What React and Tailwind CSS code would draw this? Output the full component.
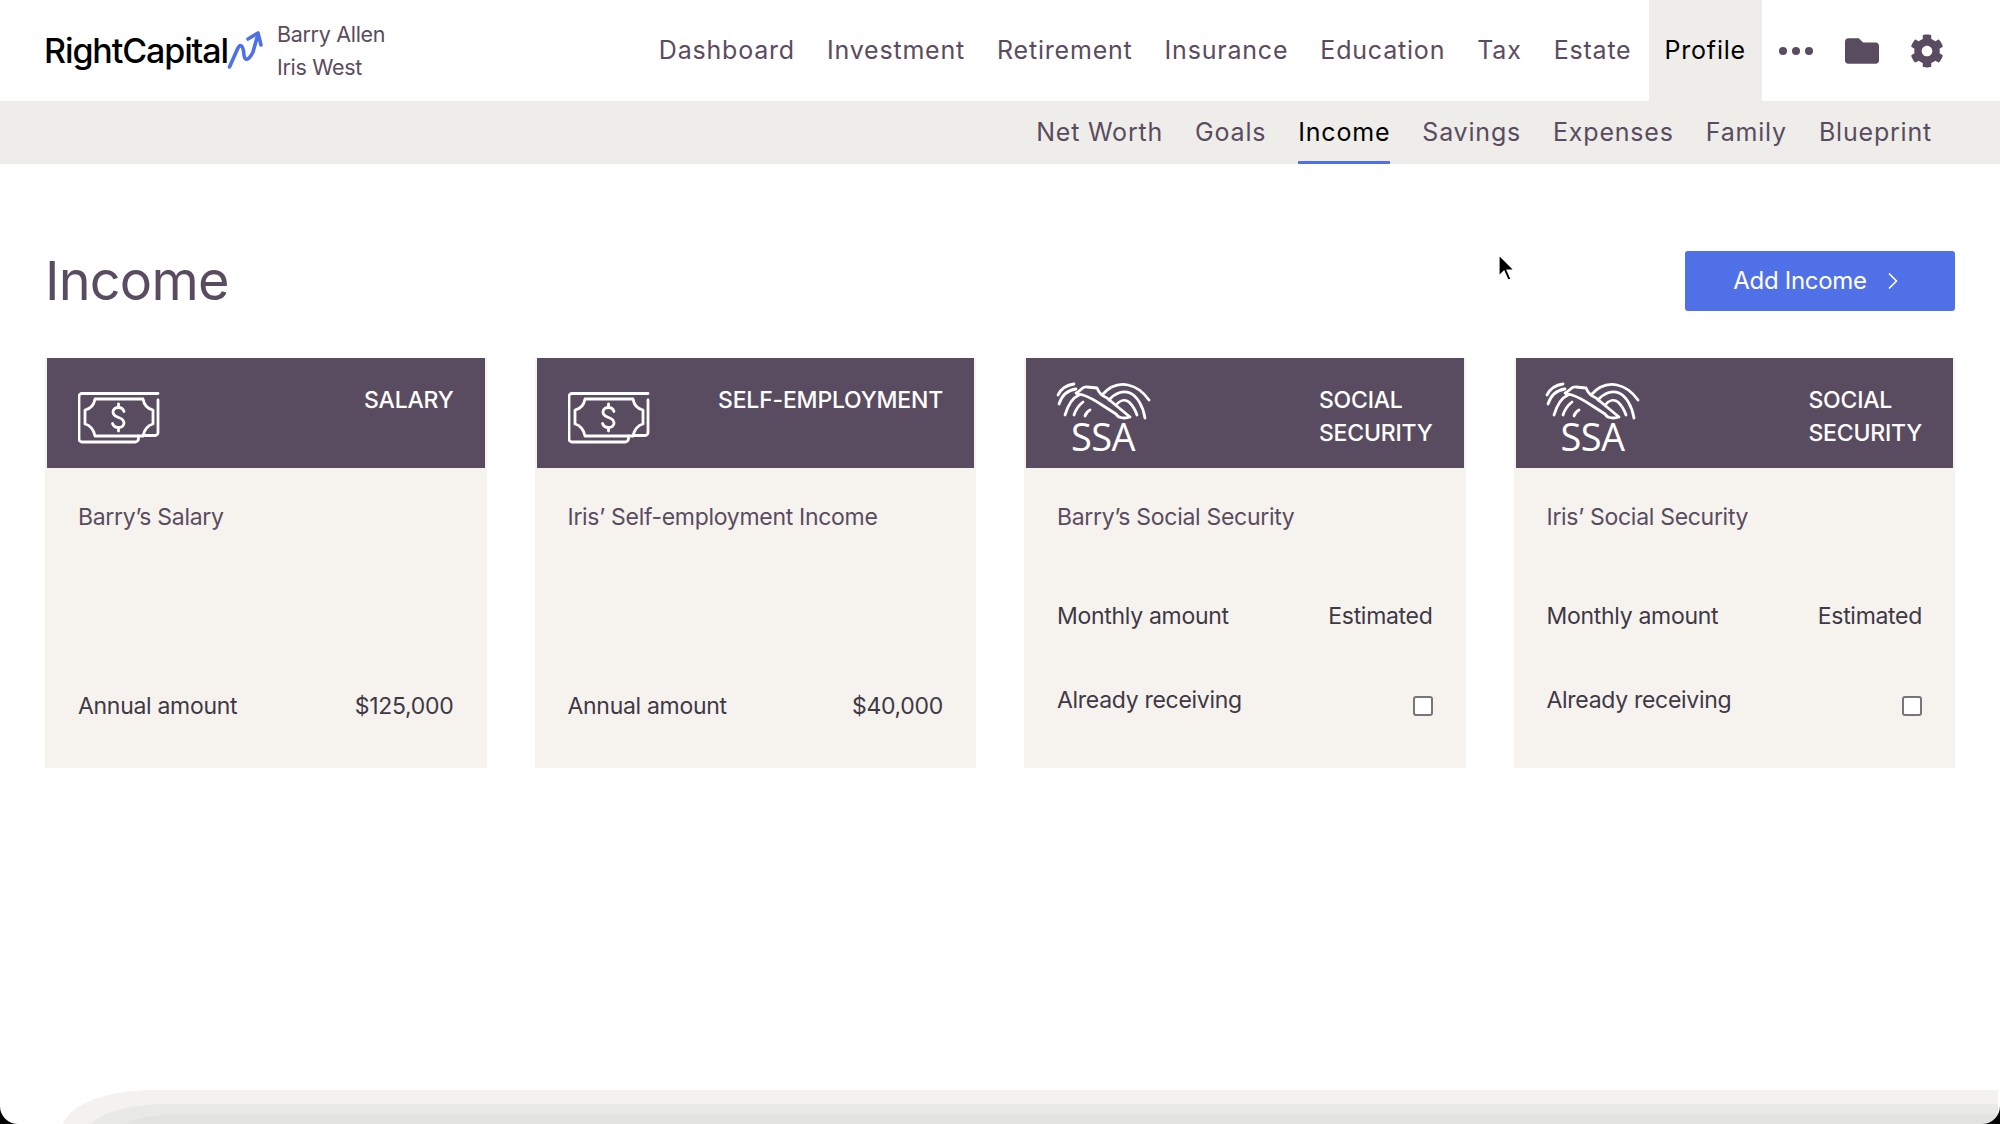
import React from "react";
import { FaCog, FaFolder } from "react-icons/fa";
import { ChevronRight } from "lucide-react";

const MoneyIcon = () => (
  <svg width="82" height="52" viewBox="0 0 82 52" fill="none" stroke="white" strokeWidth="2.8" strokeLinecap="round" strokeLinejoin="round" className="mt-[34px] shrink-0">
    <path d="M80 1.5H4a3 3 0 0 0-3 3V47a3 3 0 0 0 3 3H57a3.5 3.5 0 0 0 3.5-3.5V44" />
    <path d="M80 8V40.5a3 3 0 0 1-3 3H65" />
    <path d="M17 7H65C66 13 70 17 75 18V32C70 33 66 38 65 44H17C16 38 12 33 7 32V18C12 17 16 13 17 7Z" />
    <path d="M46 19.5C45 16.5 42.5 15.5 40.5 15.5C37.5 15.5 35 17.2 35 20C35 23 37.5 24.5 40.5 25.5C43.5 26.5 46 28 46 31C46 33.8 43.5 35.5 40.5 35.5C38 35.5 35.5 34.5 34.5 31.5M40.5 12V15.5M40.5 35.5V39" />
  </svg>
);

const SsaIcon = () => (
  <div className="flex flex-col items-center w-[92px] mt-[24px] shrink-0">
    <svg width="95" height="38" viewBox="0 0 95 38" fill="none" stroke="white" strokeWidth="2.8" strokeLinecap="round" strokeLinejoin="round">
      <path d="M2 13C5 7 10 3 18 2" />
      <path d="M3 22C6 13 12 8 20 7" />
      <path d="M9 33C12 23 16 16 23 13" />
      <path d="M18 33C20 27 23 23 27 20" />
      <path d="M29 34C30 31 32 29 34 28" />
      <path d="M20 11C25 9 26 4 31 5L41 6C43 11 46 14 51 16L74 35C68 37 62 36 60 32L46 23C40 19 33 15 27 13C25 12.5 23 13 20 11Z" />
      <path d="M46 13C53 5 62 1 72 3C82 5 88 11 93 18" />
      <path d="M53 18C59 11 67 8 74 11C81 14 87 24 89 36" />
      <path d="M60 23C64 18 69 17 73 20C76 23 79 27 81 33" />
    </svg>
    <div className="text-[38px] leading-[28px] mt-[2px] font-normal font-['Open_Sans',sans-serif] tracking-[-0.5px] text-white">SSA</div>
  </div>
);

const nav = ["Dashboard", "Investment", "Retirement", "Insurance", "Education", "Tax", "Estate"];
const sub = ["Net Worth", "Goals", "Income", "Savings", "Expenses", "Family", "Blueprint"];

const Row = ({ left, right, className = "" }) => (
  <div className={"flex items-center justify-between text-[#3f3845] " + className}>
    <span>{left}</span>
    {right}
  </div>
);

const Card = ({ icon, label, title, children }) => (
  <div className="flex flex-col bg-[#f6f3ef] h-[410px]">
    <div className="mx-[2px] h-[110px] bg-[#5a4c60] flex justify-between pl-[31px] pr-[31px] shrink-0">
      {icon}
      <div className="mt-[26px] text-left text-white font-medium text-[23px] tracking-[-0.2px] leading-[33px]">{label}</div>
    </div>
    <div className="flex flex-col flex-1 pl-[33px] pr-[33px]">
      <div className="mt-[32px] text-[#5a4c60] leading-[34px]">{title}</div>
      {children}
    </div>
  </div>
);

const Salary = ({ value }) => (
  <Row className="mt-auto mb-[45px] leading-[34px]" left="Annual amount" right={<span>{value}</span>} />
);

const Social = () => (
  <>
    <Row className="mt-[65px] leading-[34px]" left="Monthly amount" right={<span>Estimated</span>} />
    <Row
      className="mt-[50px] leading-[34px]"
      left="Already receiving"
      right={<span className="w-[20px] h-[20px] mt-[12px] rounded-[3px] border-2 border-[#77757a] bg-white" />}
    />
  </>
);

export default function App() {
  return (
    <div className="relative w-[2000px] h-[1124px] overflow-hidden bg-white font-['Inter',sans-serif] text-[23px] tracking-[-0.3px]">
      <header className="h-[101px] flex items-center pl-[44px] pr-[56px]">
        <div className="text-black text-[34px] font-medium tracking-[-1.1px] leading-none">RightCapital</div>
        <svg width="36" height="40" viewBox="0 0 36 40" fill="none" className="ml-[-1px] mt-[-2px]" stroke="#5070e8" strokeWidth="3.6" strokeLinecap="round" strokeLinejoin="round">
          <path d="M2.5 37L10 20C13 13 16 14 17 25C18 32 22 30 26 22L31 4" />
          <path d="M21 9L31 3L34 15" />
        </svg>
        <div className="ml-[14px] text-[21.5px] leading-[33px] text-[#5a4c60]">
          <div>Barry Allen</div>
          <div>Iris West</div>
        </div>
        <nav className="ml-auto flex items-center self-stretch gap-[32px] text-[25px] tracking-[0.8px] text-[#5a4c60]">
          {nav.map((n) => <span key={n}>{n}</span>)}
        </nav>
        <div className="ml-[17px] self-stretch flex items-center bg-[#eeede9] px-[16px] text-[25px] tracking-[0.8px] text-black">Profile</div>
        <div className="ml-[17px] flex items-center gap-[5px]">
          <span className="w-[8px] h-[8px] rounded-full bg-[#5a4c60]" />
          <span className="w-[8px] h-[8px] rounded-full bg-[#5a4c60]" />
          <span className="w-[8px] h-[8px] rounded-full bg-[#5a4c60]" />
        </div>
        <FaFolder className="ml-[32px] text-[#5a4c60]" size={34} />
        <FaCog className="ml-[31px] text-[#5a4c60]" size={34} />
      </header>

      <div className="h-[63px] bg-[#eeede9] flex justify-end items-stretch gap-[32px] pr-[68px] text-[25px] tracking-[0.8px] text-[#5a4c60]">
        {sub.map((s) =>
          s === "Income" ? (
            <span key={s} className="flex items-center text-black border-b-[3px] border-[#5070e8] pt-[3px]">{s}</span>
          ) : (
            <span key={s} className="flex items-center">{s}</span>
          )
        )}
      </div>

      <div className="flex items-center justify-between pl-[45px] pr-[45px] pt-[87px]">
        <h1 className="text-[54px] leading-[60px] tracking-[-0.8px] text-[#5a4c60]">Income</h1>
        <button className="w-[270px] h-[60px] rounded-[3px] bg-[#5070e8] text-white flex items-center justify-center gap-[12px] text-[24px] tracking-[-0.3px]">
          Add Income
          <ChevronRight size={28} strokeWidth={1.5} />
        </button>
      </div>

      <div className="grid grid-cols-4 gap-[48px] px-[45px] mt-[47px]">
        <Card icon={<MoneyIcon />} label="SALARY" title="Barry’s Salary"><Salary value="$125,000" /></Card>
        <Card icon={<MoneyIcon />} label="SELF-EMPLOYMENT" title="Iris’ Self-employment Income"><Salary value="$40,000" /></Card>
        <Card icon={<SsaIcon />} label={<>SOCIAL<br />SECURITY</>} title="Barry’s Social Security"><Social /></Card>
        <Card icon={<SsaIcon />} label={<>SOCIAL<br />SECURITY</>} title="Iris’ Social Security"><Social /></Card>
      </div>

      <svg className="absolute left-[1497px] top-[254px]" width="18" height="28" viewBox="0 0 18 28">
        <path d="M2 1V22L7 17L11 26L14 25L10 16H17Z" fill="black" stroke="white" strokeWidth="1.2" />
      </svg>

      <div className="absolute left-[62px] right-[2px] top-[1090px] h-[40px] bg-[#f3f2f0] rounded-tl-[90px_40px]">
        <div className="absolute left-[24px] right-0 top-[14px] h-[30px] bg-[#e9e9e8] rounded-tl-[80px_30px]">
          <div className="absolute left-[24px] right-0 top-[10px] h-[24px] bg-[#e3e3e2] rounded-tl-[70px_24px]" />
        </div>
      </div>
      <div className="absolute inset-0 rounded-b-[18px] shadow-[0_0_0_30px_#000] pointer-events-none" />
    </div>
  );
}
